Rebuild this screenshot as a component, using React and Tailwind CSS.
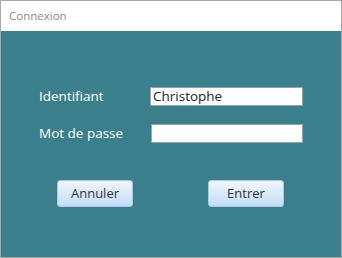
import { useState } from 'react';

const App = () => {
    const [login, setLogin] = useState('Christophe');
    const [password, setPassword] = useState('');

    return (
        <div className="w-[342px] h-[258px] flex flex-col border border-[#a8a8a8] bg-[#3b7f8c] font-['Open_Sans',sans-serif]">
            <div className="h-[30px] shrink-0 bg-white flex items-center pl-[8px] text-[11.5px] text-[#8a8a8a]">
                Connexion
            </div>

            <div className="flex-1 pt-[56px]">
                <div className="flex items-center h-[19px]">
                    <label className="w-[149px] shrink-0 pl-[38px] text-[13.5px] text-white">Identifiant</label>
                    <input
                        type="text"
                        value={login}
                        onChange={(e) => setLogin(e.target.value)}
                        className="w-[153px] h-[19px] bg-white border border-[#8fa7ad] px-[2px] text-[13.5px] text-[#222] outline-none"
                    />
                </div>

                <div className="flex items-center h-[19px] mt-[18px]">
                    <label className="w-[150px] shrink-0 pl-[38px] text-[13.5px] text-white">Mot de passe</label>
                    <input
                        type="password"
                        value={password}
                        onChange={(e) => setPassword(e.target.value)}
                        className="w-[152px] h-[19px] bg-white border border-[#8fa7ad] px-[2px] text-[13.5px] outline-none"
                    />
                </div>

                <div className="flex mt-[37px] pl-[56px] gap-[75px]">
                    <button className="w-[76px] h-[27px] rounded-[3px] border border-[#a9c8e6] bg-gradient-to-b from-[#f0f6fd] to-[#c4ddf6] text-[13px] text-[#333]">
                        Annuler
                    </button>
                    <button className="w-[76px] h-[27px] rounded-[3px] border border-[#a9c8e6] bg-gradient-to-b from-[#f0f6fd] to-[#c4ddf6] text-[13px] text-[#333]">
                        Entrer
                    </button>
                </div>
            </div>
        </div>
    );
};

export default App;
